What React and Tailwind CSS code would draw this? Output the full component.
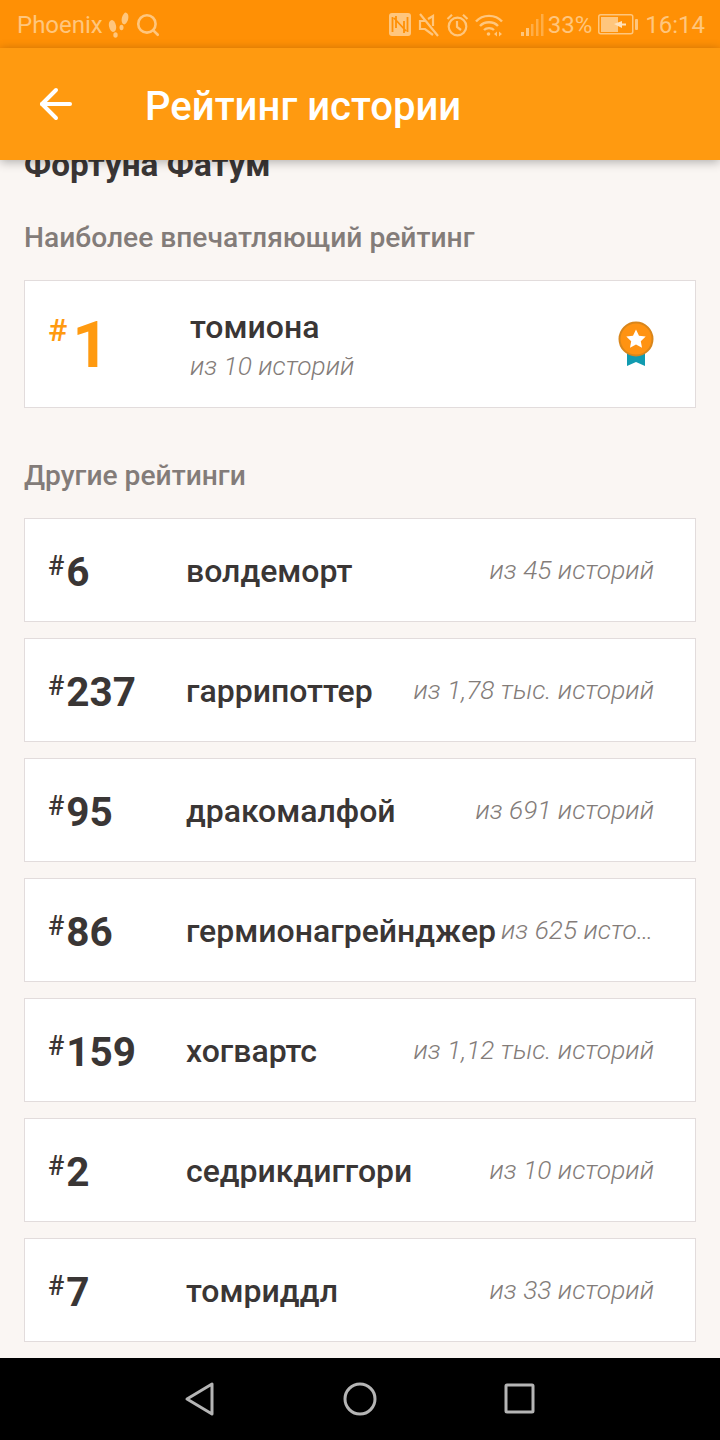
import { ArrowLeft, Search } from 'lucide-react';

const ratings = [
  { rank: 6, tag: 'волдеморт', total: 'из 45 историй' },
  { rank: 237, tag: 'гаррипоттер', total: 'из 1,78 тыс. историй' },
  { rank: 95, tag: 'дракомалфой', total: 'из 691 историй' },
  { rank: 86, tag: 'гермионагрейнджер', total: 'из 625 историй' },
  { rank: 159, tag: 'хогвартс', total: 'из 1,12 тыс. историй' },
  { rank: 2, tag: 'седрикдиггори', total: 'из 10 историй' },
  { rank: 7, tag: 'томриддл', total: 'из 33 историй' },
];

function StatusBar() {
  return (
    <div className="h-12 shrink-0 bg-[#ff9005] flex items-center justify-between pt-[1px] pl-[17px] pr-[15px] text-[#ffc67d] text-[24px]">
      <div className="flex items-center">
        <span>Phoenix</span>
        <svg width="22" height="26" viewBox="0 0 22 26" fill="currentColor" className="ml-[5px]">
          <ellipse cx="4.500" cy="14" rx="3.500" ry="6" transform="rotate(-12 4.500 14)" />
          <ellipse cx="7.500" cy="23" rx="2.200" ry="2.800" />
          <ellipse cx="17" cy="6.500" rx="3.200" ry="6" transform="rotate(12 17 6.500)" />
          <ellipse cx="13.500" cy="15.500" rx="2" ry="2.800" />
        </svg>
        <Search size={26} strokeWidth={2.4} className="ml-[5px]" />
      </div>
      <div className="flex items-center">
        <svg width="22" height="23" viewBox="0 0 22 23" className="mr-[7px]">
          <rect width="22" height="23" rx="3" fill="currentColor" />
          <path d="M3.500 4v15M18.500 4v15M7 3v12M15 8v12M5 5l12 13" stroke="#ff9005" strokeWidth="1.800" fill="none" />
        </svg>
        <svg width="22" height="24" viewBox="0 0 22 24" fill="none" stroke="currentColor" strokeWidth="2.200" className="mr-[6px]">
          <path d="M2 1l18 22M8 8H2v8h5l8 6M15 13V3l-5 3" />
        </svg>
        <svg width="23" height="24" viewBox="0 0 23 24" fill="none" stroke="currentColor" strokeWidth="2.200" className="mr-[6px]">
          <circle cx="11.500" cy="13.500" r="8.800" />
          <path d="M11 8v6l4 3M1.500 6L6 1.800M21.500 6L17 1.800" />
        </svg>
        <svg width="28" height="24" viewBox="0 0 28 24" fill="none" stroke="currentColor" strokeWidth="2.400" className="mr-[17px]">
          <path d="M1 8.500C7.500 1 20.500 1 27 8.500M5 13c4.500-5 13.500-5 18 0M9 17c2.500-2.500 7.500-2.500 10 0" />
          <circle cx="13.500" cy="21" r="1.800" fill="currentColor" stroke="none" />
          <path d="M19 21l3-2.500v5zM27 21l-3-2.500v5z" fill="currentColor" stroke="none" />
        </svg>
        <svg width="24" height="24" viewBox="0 0 24 24" className="mr-[4px]">
          <path d="M1 19h3v4H1zM6 15h3v8H6z" fill="currentColor" />
          <path d="M11 11h2.500v12H11zM16 6h2.500v17H16zM21 1h2.500v22H21z" fill="currentColor" opacity="0.55" />
        </svg>
        <span>33%</span>
        <svg width="41" height="21" viewBox="0 0 41 21" className="ml-[6px] mr-[6px]">
          <rect x="0.750" y="0.750" width="34" height="19" rx="2" fill="none" stroke="currentColor" strokeWidth="1.500" />
          <rect x="3" y="3" width="17" height="15" fill="currentColor" />
          <rect x="37" y="5" width="3" height="11" rx="1" fill="currentColor" />
          <path d="M16 10l8-3v2.500h4v2h-4V14z" fill="#ffe2bd" />
        </svg>
        <span>16:14</span>
      </div>
    </div>
  );
}

function Medal() {
  return (
    <svg width="36" height="46" viewBox="0 0 36 46">
      <path d="M9 26h18v19l-9-4-9 4z" fill="#119bb0" />
      <circle cx="18" cy="18" r="16.500" fill="#ff9312" stroke="#d9861b" strokeWidth="2" />
      <path d="M18 8.500l3 6.200 6.700.9-4.900 4.600 1.200 6.600-6-3.200-6 3.200 1.200-6.600-4.900-4.600 6.700-.9z" fill="#fff" />
    </svg>
  );
}

function RatingRow({ rank, tag, total }) {
  return (
    <div className="h-[104px] bg-white border border-[#e2dcdc] flex items-center pl-[23px] pr-[41px]">
      <div className="w-[138px] h-[46px] shrink-0 flex items-start text-[#3a3635]">
        <span className="text-[27px] leading-[27px] font-medium mt-[6px]">#</span>
        <span className="text-[40.500px] leading-[46px] font-bold ml-[2px] mt-[2px]">{rank}</span>
      </div>
      <span className="shrink-0 mt-[1px] text-[32px] font-medium text-[#3a3635] leading-none">{tag}</span>
      <span className="ml-auto mt-[2px] pl-[5px] min-w-0 truncate text-[26.300px] italic font-light text-[#837c79]">{total}</span>
    </div>
  );
}

export default function App() {
  return (
    <div className="w-[720px] h-[1440px] flex flex-col overflow-hidden bg-[#faf6f3] font-['Roboto',sans-serif]">
      <StatusBar />
      <header className="relative z-10 h-[112px] shrink-0 bg-[#ff9a10] shadow-[0_2px_10px_rgba(0,0,0,0.3)] flex items-center pl-[32px] text-white">
        <ArrowLeft size={48} strokeWidth={2} />
        <h1 className="ml-[65px] mt-[6px] text-[40.100px] font-medium">Рейтинг истории</h1>
      </header>
      <main className="flex-1 min-h-0 overflow-hidden px-[24px]">
        <h2 className="-mt-[15px] text-[33.300px] leading-[40px] font-bold text-[#3a3635]">Фортуна Фатум</h2>
        <h3 className="mt-[37px] text-[28.200px] leading-[32px] font-medium text-[#837c79]">Наиболее впечатляющий рейтинг</h3>
        <div className="mt-[26px] h-[128px] bg-white border border-[#e2dcdc] flex items-center pl-[23px] pr-[41px]">
          <div className="w-[142px] h-[70px] shrink-0 flex items-start text-[#ff9a10]">
            <span className="text-[32px] leading-[32px] font-medium mt-[5px]">#</span>
            <span className="text-[64px] leading-[70px] font-bold ml-[5px] mt-[2px]">1</span>
          </div>
          <div className="flex flex-col pt-[5px]">
            <span className="text-[32px] leading-[39px] font-medium text-[#3a3635]">томиона</span>
            <span className="text-[26.300px] leading-[39px] italic font-light text-[#837c79]">из 10 историй</span>
          </div>
          <div className="ml-auto flex">
            <Medal />
          </div>
        </div>
        <h3 className="mt-[52px] text-[28.200px] leading-[32px] font-medium text-[#837c79]">Другие рейтинги</h3>
        <div className="mt-[26px] flex flex-col gap-[16px]">
          {ratings.map(r => (
            <RatingRow key={r.rank} {...r} />
          ))}
        </div>
      </main>
      <nav className="h-[82px] shrink-0 bg-black flex items-center justify-center">
        <svg width="720" height="82" viewBox="0 0 720 82" fill="none" stroke="#b5b5b5" strokeWidth="3" strokeLinejoin="round">
          <path d="M212 26v30l-25-15z" />
          <circle cx="360" cy="41" r="15" />
          <rect x="506" y="27" width="27" height="27" rx="1" />
        </svg>
      </nav>
    </div>
  );
}
